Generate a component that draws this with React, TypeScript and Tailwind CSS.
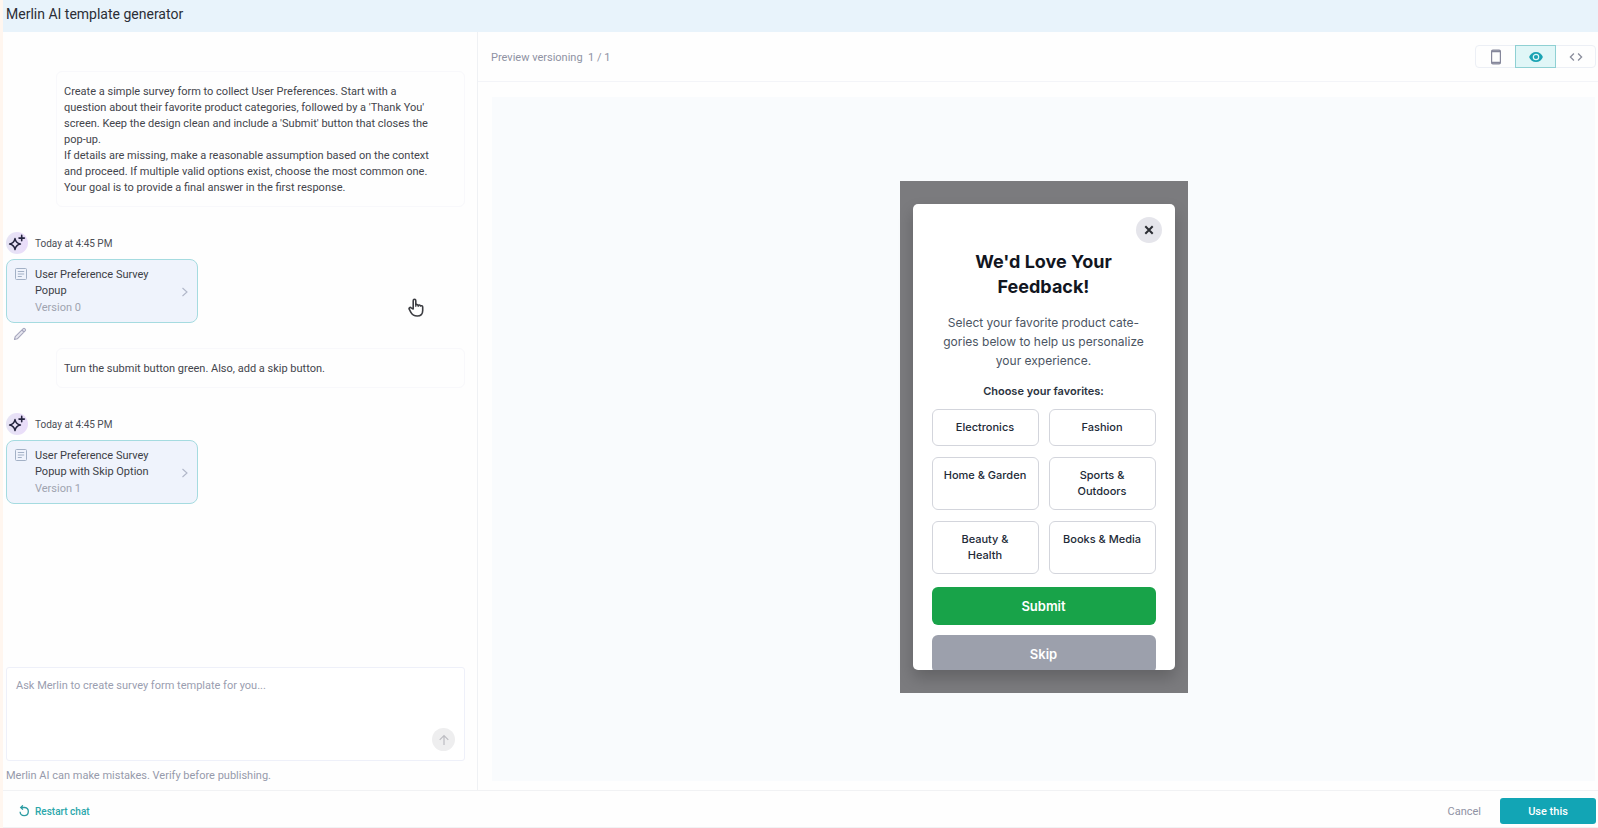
import React from "react";

const categories = [
  ["Electronics"],
  ["Fashion"],
  ["Home & Garden"],
  ["Sports &", "Outdoors"],
  ["Beauty &", "Health"],
  ["Books & Media"],
];

function SparkleAvatar() {
  return (
    <span className="flex size-[22px] shrink-0 items-center justify-center rounded-full bg-linear-to-r from-[#e6e4f4] to-[#eadcfa]">
      <svg viewBox="0 0 22 22" className="size-[22px]" aria-hidden="true">
        <path
          d="M9 6.6 Q9.9 11.2 14.4 12.1 Q9.9 13 9 17.6 Q8.1 13 3.6 12.1 Q8.1 11.2 9 6.6Z"
          fill="none"
          stroke="#25253f"
          strokeWidth="1.5"
          strokeLinejoin="round"
        />
        <path d="M15.7 3.4v5.4M13 6.1h5.4" stroke="#25253f" strokeWidth="1.6" strokeLinecap="round" />
      </svg>
    </span>
  );
}

function UserMessage({ lines }: { lines: string[] }) {
  return (
    <div className="ml-[50px] rounded-md border border-[#f8f8fb] pt-3 pr-6 pb-[10px] pl-[7px] text-[11px] leading-4 text-[#43454c]">
      {lines.map((line) => (
        <p key={line}>{line}</p>
      ))}
    </div>
  );
}

function Reply({ title, version }: { title: string; version: string }) {
  return (
    <div>
      <div className="flex items-center gap-[7px]">
        <SparkleAvatar />
        <span className="pt-[2px] text-[10px] leading-4 text-[#4b4d55]">Today at 4:45 PM</span>
      </div>
      <button
        type="button"
        className="mt-[5px] flex w-48 items-center rounded-lg border border-[#a5dbe0] bg-[#eff3fc] px-[7px] pt-[7px] pb-[5px] text-left"
      >
        <svg viewBox="0 0 14 14" className="size-[14px] shrink-0 self-start" fill="none" stroke="#a3b1c6" aria-hidden="true">
          <rect x="1.5" y="1.5" width="11" height="11" rx="1" />
          <path d="M3.8 4.5h6.4M3.8 7h6.4M3.8 9.5h4" />
        </svg>
        <span className="ml-[7px] w-[130px]">
          <span className="block text-[11px] leading-4 text-[#3c3e46]">{title}</span>
          <span className="block text-[11px] leading-[18px] text-[#a0a4b0]">{version}</span>
        </span>
        <svg viewBox="0 0 10 12" className="ml-auto h-3 w-[10px]" fill="none" stroke="#b0b6c8" strokeWidth="1.1" aria-hidden="true">
          <path d="M2.5 2l4.5 4-4.5 4" />
        </svg>
      </button>
    </div>
  );
}

function HandCursor() {
  return (
    <svg viewBox="0 0 16 20" className="absolute top-[266px] left-[405px] h-5 w-4" aria-hidden="true">
      <path
        d="M5.2 11V2.800c0-2 2.600-2 2.600 0v4.200c.4-.7 2-.7 2.400.4.500-.6 2-.5 2.300.6.600-.5 2.200-.3 2.200 1.100v3.400c0 3.200-2 5.500-5.500 5.500s-5.200-1.700-6.300-3.700L1.200 11.200c-.6-1.600 1-2.300 1.900-1.300z"
        fill="#fff"
        stroke="#3c3d42"
        strokeWidth="1.600"
        strokeLinejoin="round"
      />
      <path d="M7.800 7v2M10.200 7.500v1.500" stroke="#3c3d42" strokeWidth="1" />
    </svg>
  );
}

function ChatPanel() {
  return (
    <section className="relative flex w-[475px] shrink-0 flex-col border-r border-[#eff1f4] pr-3 pl-[3px]">
      <div className="pt-[39px]">
        <UserMessage
          lines={[
            "Create a simple survey form to collect User Preferences. Start with a question about their favorite product categories, followed by a 'Thank You' screen. Keep the design clean and include a 'Submit' button that closes the pop-up.",
            "If details are missing, make a reasonable assumption based on the context and proceed. If multiple valid options exist, choose the most common one. Your goal is to provide a final answer in the first response.",
          ]}
        />
        <div className="mt-[25px]">
          <Reply title="User Preference Survey Popup" version="Version 0" />
        </div>
        <button type="button" aria-label="Edit template" className="mt-1 ml-[7px] block">
          <svg viewBox="0 0 14 14" className="size-[14px]" fill="#e9e9f1" stroke="#a6a6bd" strokeWidth="1.1" strokeLinejoin="round" aria-hidden="true">
            <path d="M1.500 12.500l.7-2.800 8.100-8q.7-.6 1.400 0l.6.600q.6.700 0 1.400L4.300 11.800zM9 3l2 2" />
          </svg>
        </button>
        <div className="mt-[7px]">
          <UserMessage lines={["Turn the submit button green. Also, add a skip button."]} />
        </div>
        <div className="mt-[25px]">
          <Reply title="User Preference Survey Popup with Skip Option" version="Version 1" />
        </div>
      </div>
      <div className="mt-auto pb-[6px]">
        <div className="flex h-[94px] items-end rounded-[3px] border border-[#eef0f9] bg-white">
          <textarea
            aria-label="Message to Merlin"
            placeholder="Ask Merlin to create survey form template for you..."
            className="h-full grow resize-none bg-transparent px-[9px] py-[10px] text-[11px] leading-4 outline-none placeholder:text-[#9a9eb0]"
          />
          <button
            type="button"
            aria-label="Send"
            className="mr-[9px] mb-[9px] flex size-[23px] shrink-0 items-center justify-center rounded-full bg-[#eeeeef]"
          >
            <svg viewBox="0 0 12 12" className="size-3" fill="none" stroke="#bdbdc2" strokeWidth="1.200" aria-hidden="true">
              <path d="M6 11V1.500M1.700 5.800L6 1.500l4.300 4.300" />
            </svg>
          </button>
        </div>
        <p className="mt-[7px] text-[11px] leading-4 text-[#969aab]">
          Merlin AI can make mistakes. Verify before publishing.
        </p>
      </div>
      <HandCursor />
    </section>
  );
}

function ViewToggle() {
  return (
    <div className="flex h-[23px] rounded-[4px] border border-[#eceff5]">
      <button type="button" aria-label="Mobile view" className="flex w-[39px] items-center justify-center">
        <svg viewBox="0 0 12 16" className="h-4 w-3" aria-hidden="true">
          <rect x="1.600" y="1.200" width="8.800" height="13.600" rx="1.300" fill="none" stroke="#85879b" strokeWidth="1.200" />
          <path d="M1.600 2.300h8.800M1.600 13.700h8.800" stroke="#85879b" strokeWidth="1.800" />
        </svg>
      </button>
      <button
        type="button"
        aria-label="Preview"
        className="-my-px flex w-[41px] items-center justify-center border border-[#8fd0d3] bg-[#e0f6f7]"
      >
        <svg viewBox="0 0 14 10" className="h-[10px] w-[14px]" aria-hidden="true">
          <path d="M7 0C3.800 0 1.200 2 .1 5c1.100 3 3.700 5 6.900 5s5.800-2 6.900-5C12.800 2 10.200 0 7 0z" fill="#1ba3b3" />
          <circle cx="7" cy="5" r="2.700" fill="none" stroke="#e0f6f7" strokeWidth="1.200" />
        </svg>
      </button>
      <button type="button" aria-label="Code" className="flex w-[39px] items-center justify-center">
        <svg viewBox="0 0 14 10" className="h-[10px] w-[14px]" fill="none" stroke="#8a8d9c" strokeWidth="1.300" aria-hidden="true">
          <path d="M4.900 1.500L1.400 5l3.500 3.500M9.100 1.500L12.600 5 9.100 8.500" />
        </svg>
      </button>
    </div>
  );
}

function SurveyPopup() {
  return (
    <div className="h-[466px] overflow-hidden rounded-[5px] bg-white font-['Inter',sans-serif] shadow-[0_8px_16px_rgba(0,0,0,0.2)]">
      <div className="flex justify-end pt-[13px] pr-[13px]">
        <button type="button" aria-label="Close" className="flex size-[26px] items-center justify-center rounded-full bg-[#e5e5eb]">
          <svg viewBox="0 0 10 10" className="size-[10px]" stroke="#2b2d33" strokeWidth="2" aria-hidden="true">
            <path d="M1.300 1.300l7.400 7.400M8.700 1.300L1.300 8.700" />
          </svg>
        </button>
      </div>
      <div className="px-[19px] pt-[6px] text-center">
        <h2 className="px-8 text-[18px] leading-[25px] font-bold text-[#12161f]">We'd Love Your Feedback!</h2>
        <p className="mt-[14px] text-[12px] leading-[19px] text-[#4b5563]">
          Select your favorite product cate-
          <br />
          gories below to help us personalize
          <br />
          your experience.
        </p>
        <fieldset>
          <legend className="w-full pt-[13px] text-[11px] leading-4 font-semibold text-[#2b3340]">Choose your favorites:</legend>
          <div className="mt-[10px] grid grid-cols-2 gap-x-[10px] gap-y-[11px]">
            {categories.map((lines) => (
              <button
                key={lines[0]}
                type="button"
                className="flex flex-col items-center rounded-md border border-[#d3d5dc] px-2 pt-[9px] pb-[10px] text-[11px] leading-4 font-medium text-[#222a37]"
              >
                {lines.map((line) => (
                  <span key={line}>{line}</span>
                ))}
              </button>
            ))}
          </div>
        </fieldset>
        <button type="button" className="mt-[13px] block h-[38px] w-full rounded-md bg-[#18a349] pt-px text-[13px] font-semibold text-white">
          Submit
        </button>
        <button type="button" className="mt-[10px] block h-[38px] w-full rounded-md bg-[#9ca0ac] pt-px text-[13px] font-semibold text-white">
          Skip
        </button>
      </div>
    </div>
  );
}

function PreviewPanel() {
  return (
    <section className="flex min-w-0 grow flex-col">
      <div className="flex h-[50px] shrink-0 items-center justify-between border-b border-[#f3f4f8] pr-[2px] pl-[13px]">
        <p className="pt-[2px] text-[11px] leading-4 whitespace-pre text-[#8f92a3]">{"Preview versioning  1 / 1"}</p>
        <ViewToggle />
      </div>
      <div className="flex grow pt-[15px] pr-[3px] pb-[9px] pl-[14px]">
        <div className="flex grow items-center justify-center bg-[#f9fbfd] pb-1">
          <div className="w-72 bg-[#7b7b7e] px-[13px] py-[23px]">
            <SurveyPopup />
          </div>
        </div>
      </div>
    </section>
  );
}

export default function App() {
  return (
    <div className="flex min-h-screen flex-col border-l-[3px] border-[#fff6ef] bg-[#fefefe] font-['Roboto',sans-serif]">
      <header className="flex h-8 shrink-0 items-center bg-[#e8f3fb] pb-[5px] pl-[3px]">
        <h1 className="text-[14px] leading-4 text-[#2b2e36]">Merlin AI template generator</h1>
      </header>
      <main className="flex grow">
        <ChatPanel />
        <PreviewPanel />
      </main>
      <footer className="flex h-[38px] shrink-0 items-center border-y border-[#f1f2f4] pt-1 pr-[2px] pl-[15px]">
        <button type="button" className="flex items-center gap-[5px] text-[10px] leading-4 font-medium text-[#2ba7ab]">
          <svg viewBox="0 0 12 12" className="size-3" fill="none" stroke="#2b9ba2" strokeWidth="1.300" aria-hidden="true">
            <path d="M3 2.500h3.800a4.100 4.100 0 1 1-4.700 4.300M4.900.4L2.700 2.500l2.200 2.100" />
          </svg>
          <span className="pt-[2px]">Restart chat</span>
        </button>
        <button type="button" className="ml-auto pt-[2px] text-[11px] leading-4 text-[#8f92a3]">
          Cancel
        </button>
        <button type="button" className="ml-[19px] h-[26px] w-24 rounded-[3px] bg-[#12a5b5] pt-[2px] text-[11px] leading-4 font-medium text-white">
          Use this
        </button>
      </footer>
    </div>
  );
}
